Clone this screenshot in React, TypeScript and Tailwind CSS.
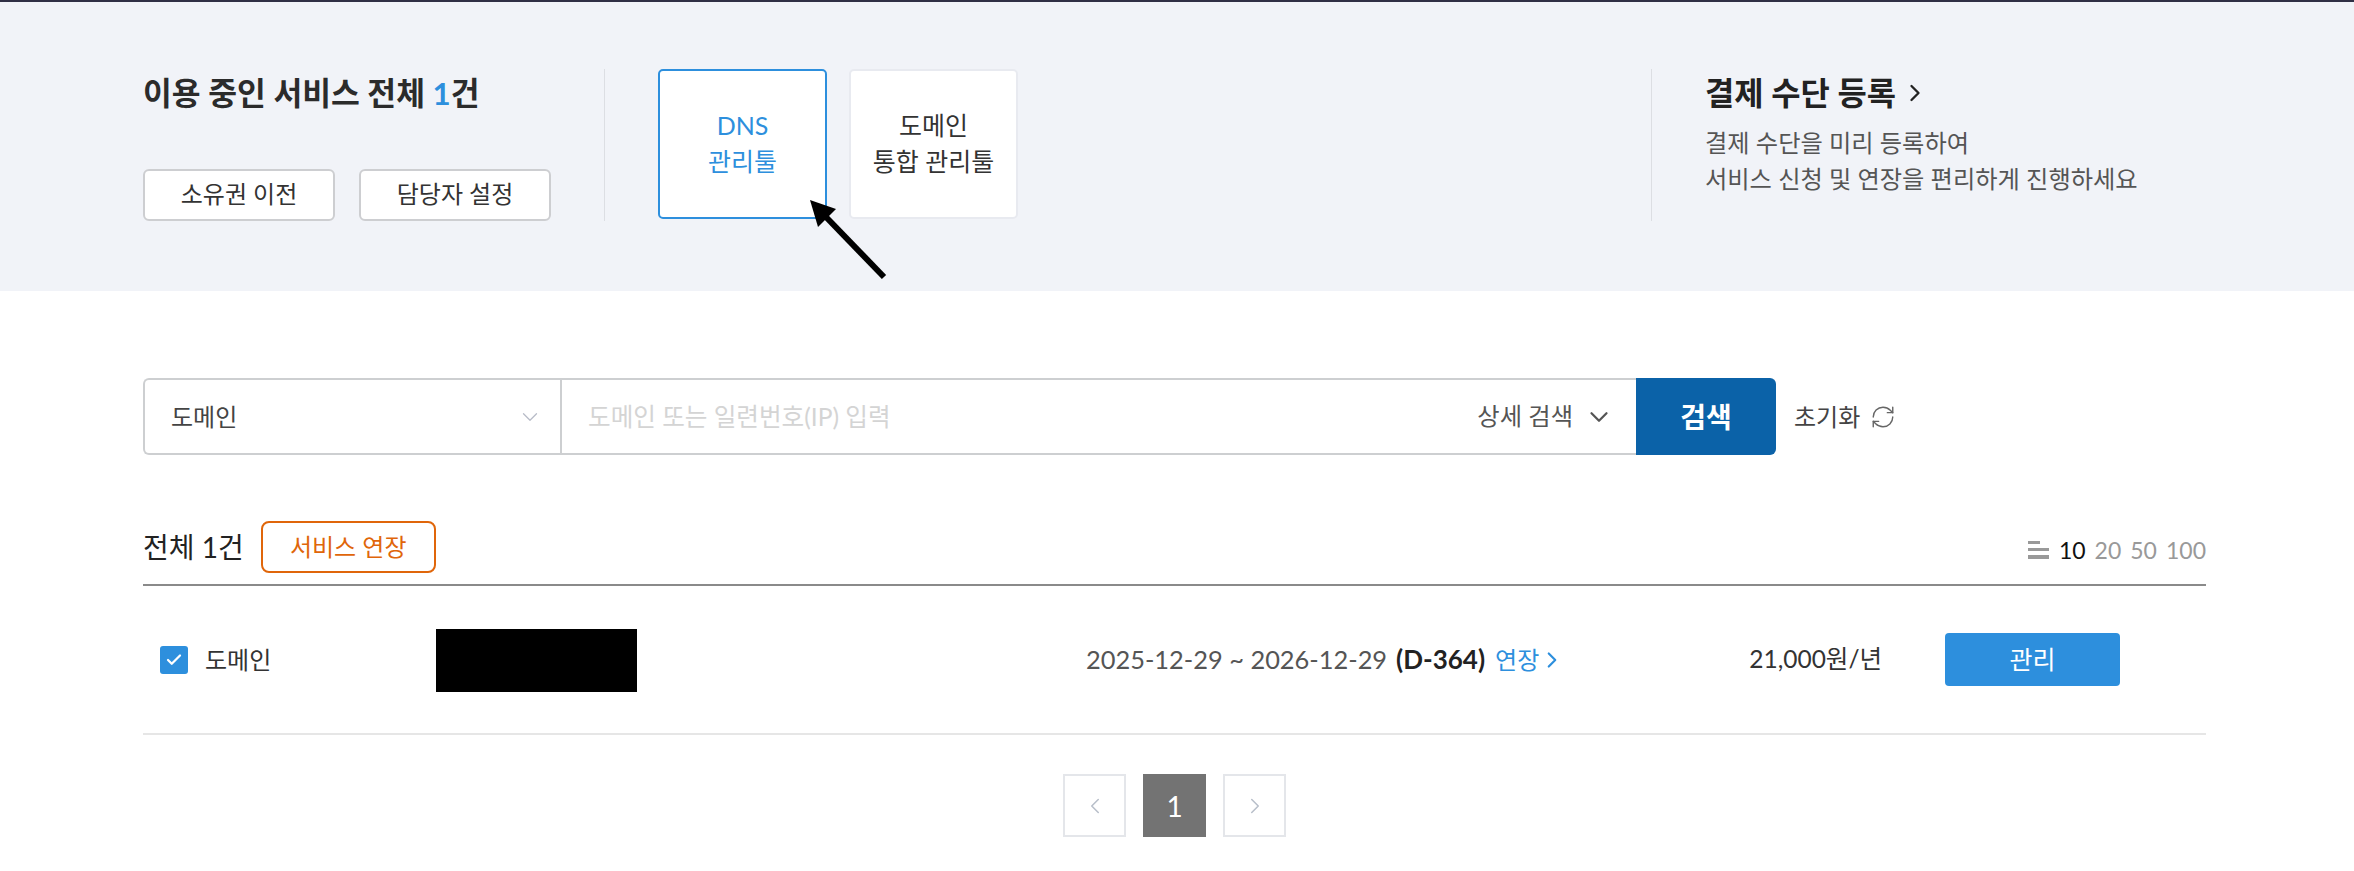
import React from 'react';
import { ChevronDown, ChevronLeft, ChevronRight, Check, RefreshCw } from 'lucide-react';

const App: React.FC = () => {
  return (
    <div className="relative min-h-[871px] bg-white overflow-hidden text-[#222] [font-family:Lato,'Noto_Sans_CJK_KR',sans-serif]">
      {/* top summary */}
      <section className="h-[291px] border-t-2 border-[#2f2f45] bg-[#f1f3f8] pl-[143px] pt-[67px] flex items-start">
        <div className="w-[461px] h-[152px] flex flex-col justify-between">
          <h2 className="text-[31.3px] leading-[48px] font-bold text-[#2b2b2b]">
            이용 중인 서비스 전체 <span className="text-[#2d8fdd]">1</span>건
          </h2>
          <div className="flex gap-6">
            <button className="w-[192px] h-[52px] pb-[2px] bg-white border-2 border-[#cdced1] rounded-[6px] text-[24px] text-[#333]">소유권 이전</button>
            <button className="w-[192px] h-[52px] pb-[2px] bg-white border-2 border-[#cdced1] rounded-[6px] text-[24px] text-[#333]">담당자 설정</button>
          </div>
        </div>
        <div className="h-[152px] pl-[53px] border-l border-[#dcdee3] flex gap-[22px]">
          <div className="w-[169px] h-[150px] pb-[2px] bg-white border-2 border-[#2d8fdd] rounded-[5px] flex items-center justify-center text-center text-[25px] leading-[36px] text-[#2d8fdd]">
            <div>DNS<br />관리툴</div>
          </div>
          <div className="w-[169px] h-[150px] pb-[2px] bg-white border-2 border-[#e8eaf0] rounded-[5px] flex items-center justify-center text-center text-[25px] leading-[36px] text-[#333]">
            <div>도메인<br />통합 관리툴</div>
          </div>
        </div>
        <div className="ml-[633px] h-[152px] pl-[53px] border-l border-[#dcdee3]">
          <div className="flex items-center gap-[5px] text-[31.8px] leading-[48px] font-bold text-[#222]">
            결제 수단 등록
            <ChevronRight className="w-[28px] h-[28px]" strokeWidth={2} />
          </div>
          <p className="mt-[8px] text-[24.25px] leading-[36px] text-[#555]">
            결제 수단을 미리 등록하여<br />서비스 신청 및 연장을 편리하게 진행하세요
          </p>
        </div>
      </section>

      <main className="pl-[143px] pr-[148px]">
        {/* search */}
        <div className="mt-[87px] flex items-center h-[77px]">
          <div className="w-[1493px] h-[77px] flex border-2 border-[#cdcfd1] border-r-0 rounded-l-[6px]">
            <div className="w-[417px] flex items-center justify-between pl-[26px] pr-[17px] border-r-2 border-[#cdcfd1] text-[24px] text-[#444]">
              도메인
              <ChevronDown className="w-[26px] h-[26px] text-[#b8bcc8]" strokeWidth={1.2} />
            </div>
            <div className="flex-1 flex items-center justify-between pl-[26px] pr-[22px]">
              <span className="pt-[2px] text-[24.6px] text-[#d4d4d4]">도메인 또는 일련번호(IP) 입력</span>
              <span className="flex items-center gap-[11px] text-[24.3px] text-[#555]">
                상세 검색
                <ChevronDown className="w-[30px] h-[30px] text-[#555]" strokeWidth={1.8} />
              </span>
            </div>
          </div>
          <button className="w-[140px] h-[77px] bg-[#0b62a8] rounded-r-[6px] text-white text-[28px] font-bold">검색</button>
          <div className="ml-[18px] flex items-center gap-[10px] text-[24px] text-[#444]">
            초기화
            <RefreshCw className="w-[26px] h-[26px] text-[#666]" strokeWidth={1.3} />
          </div>
        </div>

        {/* list head */}
        <div className="mt-[67px] h-[64px] pb-[12px] border-b-2 border-[#8a8a8a] flex items-center justify-between">
          <div className="flex items-center gap-[17px]">
            <span className="text-[28px] text-[#222]">전체 1건</span>
            <button className="w-[175px] h-[52px] bg-white border-2 border-[#e0660a] rounded-[8px] text-[24px] text-[#e0660a]">서비스 연장</button>
          </div>
          <div className="flex items-center gap-[9px] text-[23px] text-[#999] pt-[6px]">
            <svg width="22" height="18" viewBox="0 0 22 18" fill="#999">
              <rect x="0" y="0" width="12" height="3" />
              <rect x="0" y="7" width="21" height="3" />
              <rect x="0" y="14" width="21" height="4" />
            </svg>
            <span className="text-[#111]">10</span>
            <span>20</span>
            <span>50</span>
            <span>100</span>
          </div>
        </div>

        {/* row */}
        <div className="h-[149px] border-b-2 border-[#e6e6e6] flex items-center relative">
          <span className="ml-[17px] w-[28px] h-[28px] rounded-[3px] bg-[#2d8fdd] flex items-center justify-center">
            <Check className="w-[18px] h-[18px] text-white" strokeWidth={3} />
          </span>
          <span className="ml-[17px] w-[231px] text-[24px] text-[#333]">도메인</span>
          <div className="w-[201px] h-[63px] mt-[2px] bg-black" />
          <div className="ml-[449px] flex items-center text-[25.4px] text-[#555]">
            <span>2025-12-29 ~ 2026-12-29</span>
            <span className="ml-[9px] text-[26px] font-bold text-[#222]">(D-364)</span>
            <span className="ml-[10px] text-[24px] text-[#2d8fdd] flex items-center">
              연장
              <ChevronRight className="w-[26px] h-[26px]" strokeWidth={2} />
            </span>
          </div>
          <span className="ml-auto mr-[63px] text-[24.5px] text-[#333]">21,000원/년</span>
          <button className="mr-[86px] w-[175px] h-[53px] bg-[#2d8fdd] rounded-[4px] text-white text-[25px]">관리</button>
        </div>

        {/* paging */}
        <div className="mt-[39px] flex justify-center gap-[17px]">
          <span className="w-[63px] h-[63px] border-2 border-[#e4e6ea] flex items-center justify-center">
            <ChevronLeft className="w-[26px] h-[26px] text-[#b8bfca]" strokeWidth={1.4} />
          </span>
          <span className="w-[63px] h-[63px] bg-[#737373] flex items-center justify-center text-white text-[28px]">1</span>
          <span className="w-[63px] h-[63px] border-2 border-[#e4e6ea] flex items-center justify-center">
            <ChevronRight className="w-[26px] h-[26px] text-[#b8bfca]" strokeWidth={1.4} />
          </span>
        </div>
      </main>

      {/* arrow annotation */}
      <svg className="absolute left-[790px] top-[180px]" width="110" height="110" viewBox="0 0 110 110">
        <path d="M94 97 L36 37" stroke="#000" strokeWidth="6" fill="none" />
        <path d="M20 20 L46 29 L28 47 Z" fill="#000" />
      </svg>
    </div>
  );
};

export default App;
